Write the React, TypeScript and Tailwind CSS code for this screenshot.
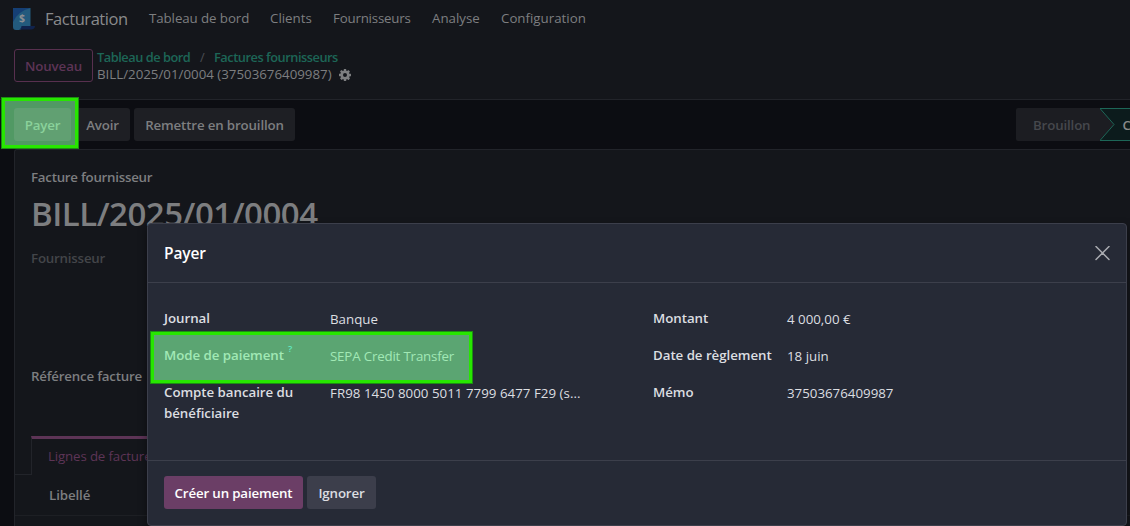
import React from 'react';

const navItems = [
  { label: 'Tableau de bord', box: 'w-[121px] tracking-[-0.08px]' },
  { label: 'Clients', box: 'w-[63px]' },
  { label: 'Fournisseurs', box: 'w-[99px] tracking-[-0.2px]' },
  { label: 'Analyse', box: 'w-[69px]' },
  { label: 'Configuration', box: 'w-[90px]' },
];

function Logo() {
  return (
    <svg className="mr-[10px] block h-[22px] w-[22px]" viewBox="0 0 22 22">
      <path d="M0 0h17.500v18H9v1a3 3 0 0 1-3 3H3a3 3 0 0 1-3-3z" fill="#235a7d" />
      <path d="M0 0h17.500Q5 3 0 14z" fill="#153f75" />
      <path d="M8.500 18H22c0 2-1.500 3.500-4 3.500H6c1.500-.5 2.500-1.500 2.500-3.500z" fill="#10234d" />
      <text x="8.900" y="14.300" textAnchor="middle" fontSize="10.500" fontWeight="700" fontFamily="Open Sans, sans-serif" fill="#8c8f93">$</text>
    </svg>
  );
}

function Gear() {
  return (
    <svg className="ml-[7px] block h-3 w-3 shrink-0" viewBox="0 0 1536 1536">
      <path
        fill="#7d7e80"
        fillRule="evenodd"
        d="M1024 768a256 256 0 1 0-512 0 256 256 0 0 0 512 0zM1536 659v222q0 12-8 23t-20 13l-185 28q-19 54-39 91 35 50 107 138 10 12 10 25t-9 23q-27 37-99 108t-94 71q-12 0-26-9l-138-108q-44 23-91 38-16 136-29 186-7 28-36 28H657q-14 0-24.500-8.500T621 1506l-28-184q-49-16-90-37l-141 107q-10 9-25 9-14 0-25-11-126-114-165-168-7-10-7-23 0-12 8-23 15-21 51-66.500t54-70.500q-27-50-41-99L29 913q-13-2-21-12.500T0 877V655q0-12 8-23t19-13l186-28q14-46 39-92-40-57-107-138-10-12-10-24 0-10 9-23 26-36 98.500-107.500T337 135q13 0 26 10l138 107q44-23 91-38 16-136 29-186 7-28 36-28h222q14 0 24.500 8.500T915 30l28 184q49 16 90 37l142-107q9-9 24-9 13 0 25 10 129 119 165 170 7 8 7 22 0 12-8 23-15 21-51 66.500t-54 70.500q26 50 41 98l183 28q13 2 21 12.500t8 23.500z"
      />
    </svg>
  );
}

type FieldProps = {
  label: React.ReactNode;
  value: string;
  help?: boolean;
  labelWidth: string;
  valueClass?: string;
};

function Field({ label, value, help, labelWidth, valueClass = '' }: FieldProps) {
  return (
    <div className="flex h-[37px] items-start">
      <div className={`${labelWidth} flex shrink-0 whitespace-nowrap font-semibold leading-[21px] tracking-[-0.04px] text-[#dcdee1]`}>
        <span>{label}</span>
        {help && <span className="ml-1 mt-[-2px] text-[9.5px] leading-[12px] text-[#35dcff]">?</span>}
      </div>
      <div className={`whitespace-nowrap pt-px leading-[21px] text-[#dcdee1] ${valueClass}`}>{value}</div>
    </div>
  );
}

export default function App() {
  return (
    <div className="relative flex h-[526px] w-[1130px] flex-col overflow-hidden bg-[#14161b] font-['Open_Sans','Noto_Sans',sans-serif] text-[13.3px] leading-[21px] text-[#7d7e80]">
      <header className="flex h-[37px] items-center whitespace-nowrap pl-[13px]">
        <Logo />
        <div className="w-[104px] text-[16.5px] tracking-[-0.45px] text-[#898a8c]">Facturation</div>
        {navItems.map((item) => (
          <div key={item.label} className={item.box}>{item.label}</div>
        ))}
      </header>

      <section className="flex h-[63px] border-b border-[#22242a] pl-[14px] pt-3">
        <button className="h-[33px] w-[79px] rounded-[3px] border border-[#58304f] pt-px font-semibold tracking-[-0.1px] text-[#5d3456]">Nouveau</button>
        <div className="ml-1 whitespace-nowrap leading-[17px]">
          <div className="flex text-[12.8px] font-semibold tracking-[-0.47px] text-[#1d6657]">
            <span className="w-[103px]">Tableau de bord</span>
            <span className="w-[14px] font-normal text-[#4b4d52]">/</span>
            <span>Factures fournisseurs</span>
          </div>
          <div className="flex items-center">
            <span className="w-[235px]">BILL/2025/01/0004 (37503676409987)</span>
            <Gear />
          </div>
        </div>
      </section>

      <section className="flex h-[49px] items-center bg-[#0c0d12] pl-[14px] font-semibold tracking-[-0.15px]">
        <button className="h-[33px] w-[57px] rounded-[3px] bg-[#351e35] pt-px text-[#a0a0a0]">Payer</button>
        <button className="ml-1 h-[33px] w-[55px] rounded-[3px] bg-[#1e1f24] pt-px">Avoir</button>
        <button className="ml-1 h-[33px] w-[161px] rounded-[3px] bg-[#1e1f24] pt-px">Remettre en brouillon</button>
        <div className="ml-auto flex h-[33px] w-[114px] overflow-hidden rounded-l-[2px] bg-[#1c1d22]">
          <span className="w-[84px] pl-[17px] leading-[34px] text-[#46484d]">Brouillon</span>
          <div className="relative w-[30px]">
            <svg className="block h-[33px] w-[30px]" viewBox="0 0 30 33">
              <path d="M0 .5H32V32.500H0L14 16.500Z" fill="#0c1b1c" stroke="#1d6657" />
            </svg>
            <span className="absolute left-[22.5px] top-0 leading-[34px] text-[#8a8a8a]">C</span>
          </div>
        </div>
      </section>

      <div className="flex flex-1 bg-[#0c0d12] pl-[14px]">
        <main className="flex-1 rounded-tl-[3px] border-l border-t border-[#22242a] bg-[#14161b] pt-[17px]">
          <div className="pl-4 font-semibold tracking-[-0.25px]">Facture fournisseur</div>
          <h1 className="mt-[5px] h-[42px] whitespace-nowrap pl-4 text-[33px] font-semibold leading-[42px] tracking-[-0.5px]">BILL/2025/01/0004</h1>
          <div className="mt-[13px] pl-4 font-semibold tracking-[-0.2px] text-[#434549]">Fournisseur</div>
          <div className="mt-[97px] pl-4 font-semibold tracking-[-0.2px]">Référence facture</div>
          <div className="mt-[49px] flex h-[39px]">
            <div className="w-4 border-b border-[#22242a]" />
            <div className="w-[140px] whitespace-nowrap border-l border-t-[3px] border-l-[#22242a] border-t-[#5d3456] pl-4 pt-[7px] tracking-[-0.15px] text-[#5d3456]">Lignes de facture</div>
          </div>
          <div className="h-[41px] border-b border-[#1d1f24] pl-[34px] pt-[10px] font-semibold tracking-[-0.1px]">Libellé</div>
        </main>
      </div>

      <div role="dialog" className="absolute left-[147px] top-[223px] flex h-[303px] w-[980px] flex-col rounded-[4px] border border-[#3c3f4b] bg-[#262a36] shadow-[0_4px_10px_rgba(0,0,0,0.4)]">
        <header className="flex h-[59px] items-center justify-between border-b border-[#3c3f4b] pl-4 pr-4">
          <h4 className="text-[15.5px] font-semibold tracking-[-0.1px] text-white">Payer</h4>
          <svg className="h-[15px] w-[15px]" viewBox="0 0 15 15" fill="none" stroke="#a9abb0" strokeWidth="1.500" strokeLinecap="round">
            <path d="M1 .5l13 13M14 .5L1 13.500" />
          </svg>
        </header>
        <div className="flex h-[178px] border-b border-[#3c3f4b] pl-4 pt-[25px]">
          <div className="w-[489px]">
            <Field label="Journal" value="Banque" labelWidth="w-[166px]" />
            <Field label="Mode de paiement" value="SEPA Credit Transfer" help labelWidth="w-[166px]" valueClass="tracking-[-0.17px]" />
            <Field label={<>Compte bancaire du<br />bénéficiaire</>} value="FR98 1450 8000 5011 7799 6477 F29 (s..." labelWidth="w-[166px]" valueClass="tracking-[0.03px]" />
          </div>
          <div>
            <Field label="Montant" value="4 000,00 €" labelWidth="w-[134px]" />
            <Field label="Date de règlement" value="18 juin" labelWidth="w-[134px]" />
            <Field label="Mémo" value="37503676409987" labelWidth="w-[134px]" />
          </div>
        </div>
        <footer className="flex gap-1 pl-4 pt-[15px] font-semibold tracking-[-0.15px]">
          <button className="h-[33px] w-[139px] whitespace-nowrap rounded-[3px] bg-[#6b3e66] pt-px text-white">Créer un paiement</button>
          <button className="h-[33px] w-[69px] rounded-[3px] bg-[#3c3e4b] pt-px text-[#dcdee1]">Ignorer</button>
        </footer>
      </div>

      <div className="absolute left-px top-[97px] h-[52px] w-[78px] border border-[#1c8f12] bg-[#7df098]/62">
        <div className="h-full w-full border-[3px] border-[#27e600]" />
      </div>
      <div className="absolute left-[150px] top-[331px] h-[53px] w-[323px] border border-[#1c8f12] bg-[#7df098]/62">
        <div className="h-full w-full border-[3px] border-[#27e600]" />
      </div>
    </div>
  );
}
